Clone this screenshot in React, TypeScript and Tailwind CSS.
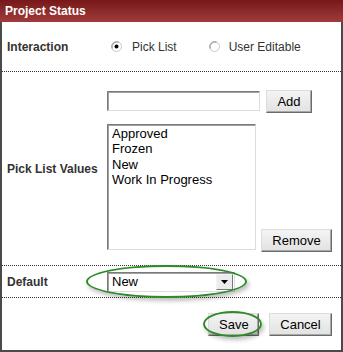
const btn =
  'h-[23px] px-[10px] text-[13px] text-black bg-gradient-to-b from-[#f4f4f4] to-[#e2e2e2] border border-t-[#dcdcdc] border-l-[#dcdcdc] border-r-[#6a6a6a] border-b-[#6a6a6a] shadow-[inset_-1px_-1px_0_#a8a8a8] leading-none';

const inset =
  'border border-t-[#7a7a7a] border-l-[#7a7a7a] border-r-[#dcdcdc] border-b-[#dcdcdc] shadow-[inset_1px_1px_0_#a0a0a0] bg-white';

const Radio = ({ checked }: { checked?: boolean }) => (
  <svg width="11" height="11" viewBox="0 0 11 11" className="shrink-0">
    <circle cx="5.5" cy="5.5" r="5" fill="#fff" stroke="#c8c8c8" />
    <path d="M1.2 7.5 A5 5 0 0 1 7.5 1.2" fill="none" stroke="#8a8a8a" strokeWidth="1" />
    {checked && <circle cx="5.5" cy="5.5" r="2" fill="#000" />}
  </svg>
);

const Ellipse = ({ className }: { className: string }) => (
  <div
    className={`pointer-events-none absolute rounded-[50%] border-2 border-[#2f8a2a] shadow-[2px_3px_4px_rgba(0,0,0,0.25)] ${className}`}
  />
);

const values = ['Approved', 'Frozen', 'New', 'Work In Progress'];

export default function App() {
  return (
    <div className="w-[343px] h-[352px] bg-white font-['Liberation_Sans',Arial,sans-serif] text-[12px] text-[#333] flex flex-col">
      <div className="h-[22px] shrink-0 flex items-center px-[5px] bg-gradient-to-b from-[#781719] to-[#a03b3b] text-white font-bold">
        Project Status
      </div>
      <div className="flex-1 flex flex-col border-x-2 border-b-2 border-[#4a4a4a]">
        <div className="h-[50px] flex items-center border-b border-dotted border-[#333]">
          <div className="w-[105px] pl-[5px] font-bold">Interaction</div>
          <div className="flex items-center">
            <div className="ml-[4px] flex items-center gap-[10px]">
              <Radio checked />
              <span>Pick List</span>
            </div>
            <div className="ml-[32px] flex items-center gap-[9px]">
              <Radio />
              <span>User Editable</span>
            </div>
          </div>
        </div>

        <div className="h-[194px] flex items-center border-b border-dotted border-[#333]">
          <div className="w-[105px] pl-[5px] font-bold">Pick List Values</div>
          <div className="flex flex-col gap-[11px] pt-[2px]">
            <div className="flex items-center gap-[6px]">
              <div className={`w-[153px] h-[20px] ${inset}`} />
              <button className={`${btn} w-[46px] h-[21px] px-0`}>Add</button>
            </div>
            <div className="flex items-end gap-[5px]">
              <div
                className={`w-[149px] h-[126px] ${inset} px-[4px] pt-[1px] text-[13px] leading-[15.5px] text-black`}
              >
                {values.map((v) => (
                  <div key={v}>{v}</div>
                ))}
              </div>
              <button className={`${btn} w-[71px] -mb-[2px]`}>Remove</button>
            </div>
          </div>
        </div>

        <div className="h-[32px] flex items-center border-b border-dotted border-[#333]">
          <div className="w-[105px] pl-[5px] font-bold">Default</div>
          <div className="relative">
            <div className={`w-[128px] h-[20px] ${inset} flex items-center justify-between`}>
              <span className="pl-[4px] text-[13px] text-black">New</span>
              <div className="w-[17px] h-[16px] mr-[1px] flex items-center justify-center bg-[#ececec] border border-t-[#f4f4f4] border-l-[#f4f4f4] border-r-[#777] border-b-[#777]">
                <svg width="7" height="4" viewBox="0 0 7 4">
                  <path d="M0 0h7L3.5 4z" fill="#000" />
                </svg>
              </div>
            </div>
            <Ellipse className="-left-[21px] -right-[12px] -top-[7px] -bottom-[6px]" />
          </div>
        </div>

        <div className="flex-1 flex items-center justify-end gap-[10px] pr-[9px] pt-[1px]">
          <div className="relative">
            <button className={`${btn} w-[51px] px-0`}>Save</button>
            <Ellipse className="-left-[5px] -right-[3px] -top-[2px] -bottom-[1px]" />
          </div>
          <button className={`${btn} w-[63px] px-0`}>Cancel</button>
        </div>
      </div>
    </div>
  );
}
